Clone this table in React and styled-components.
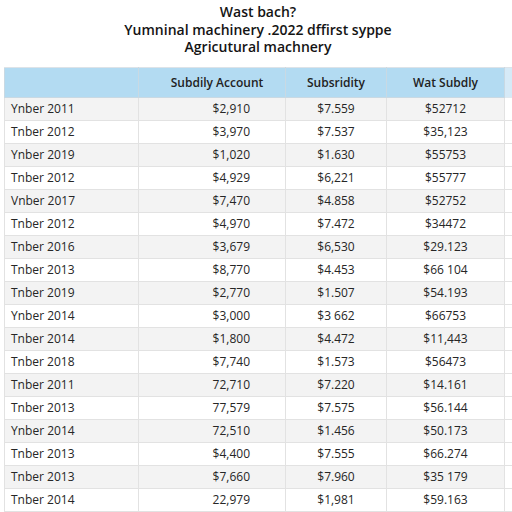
import React from 'react'
import styled, { createGlobalStyle } from 'styled-components';

const GlobalStyle = createGlobalStyle`
    body {
        margin: 0;
        background: #ffffff;
        font-family: "Open Sans", "Liberation Sans", sans-serif;
        color: #1e1e1e;
        overflow: hidden;
    }
`

const rows = [
    ['Ynber 2011', '$2,910', '$7.559', '$52712'],
    ['Tnber 2012', '$3,970', '$7.537', '$35,123'],
    ['Ynber 2019', '$1,020', '$1.630', '$55753'],
    ['Tnber 2012', '$4,929', '$6,221', '$55777'],
    ['Vnber 2017', '$7,470', '$4.858', '$52752'],
    ['Tnber 2012', '$4,970', '$7.472', '$34472'],
    ['Tnber 2016', '$3,679', '$6,530', '$29.123'],
    ['Tnber 2013', '$8,770', '$4.453', '$66 104'],
    ['Tnber 2019', '$2,770', '$1.507', '$54.193'],
    ['Ynber 2014', '$3,000', '$3 662', '$66753'],
    ['Tnber 2014', '$1,800', '$4.472', '$11,443'],
    ['Tnber 2018', '$7,740', '$1.573', '$56473'],
    ['Tnber 2011', '72,710', '$7.220', '$14.161'],
    ['Tnber 2013', '77,579', '$7.575', '$56.144'],
    ['Ynber 2014', '72,510', '$1.456', '$50.173'],
    ['Tnber 2013', '$4,400', '$7.555', '$66.274'],
    ['Tnber 2013', '$7,660', '$7.960', '$35 179'],
    ['Tnber 2014', '22,979', '$1,981', '$59.163'],
]

const App = () => {
    return (
        <>
            <GlobalStyle />
            <Page>
                <Title>
                    <div>Wast bach?</div>
                    <div>Yumninal machinery .2022 dffirst syppe</div>
                    <div>Agricutural machnery</div>
                </Title>

                <Table>
                    <colgroup>
                        <col style={{ width: 134 }} />
                        <col style={{ width: 147 }} />
                        <col style={{ width: 101 }} />
                        <col style={{ width: 118 }} />
                        <col style={{ width: 20 }} />
                    </colgroup>
                    <thead>
                        <tr>
                            <Head></Head>
                            <Head $shift>Subdily Account</Head>
                            <Head>Subsridity</Head>
                            <Head>Wat Subdly</Head>
                            <Head $faded></Head>
                        </tr>
                    </thead>
                    <tbody>
                        {
                            rows.map((row, i) => {
                                return (
                                    <Row key={i} $odd={i % 2 === 0}>
                                        <Cell $align="left">{row[0]}</Cell>
                                        <Cell $align="right">{row[1]}</Cell>
                                        <Cell $align="center">{row[2]}</Cell>
                                        <Cell $align="center">{row[3]}</Cell>
                                        <Cell $faded></Cell>
                                    </Row>
                                )
                            })
                        }
                    </tbody>
                </Table>
            </Page>
        </>
    )
}

export default App

const Page = styled.div`
    width: 512px;
    height: 512px;
    overflow: hidden;
    padding-top: 3px;
    box-sizing: border-box;
`

const Title = styled.div`
    text-align: center;
    font-weight: 600;
    font-size: 14px;
    line-height: 17.5px;
    color: #141414;
    margin-bottom: 11px;
    margin-left: 4px;
`

const Table = styled.table`
    margin-left: 4px;
    width: 520px;
    table-layout: fixed;
    border-collapse: collapse;
    font-size: 12px;
`

const Head = styled.th`
    height: 29px;
    padding: 0 0 0 ${p => p.$shift ? '10px' : '0'};
    background: ${p => p.$faded ? '#d6eaf7' : '#b3dbf2'};
    border: 1px solid ${p => p.$faded ? '#dfe9ef' : '#c9d9e3'};
    border-top: 1px solid #dde3e8;
    font-weight: 600;
    font-size: 12px;
    color: #222;
    text-align: center;
`

const Row = styled.tr`
    background: ${p => p.$odd ? '#f3f3f3' : '#ffffff'};
`

const Cell = styled.td`
    height: 22px;
    padding: 0 ${p => p.$align === 'right' ? '35px' : '6px'} 0 6px;
    border: 1px solid #e2e2e2;
    text-align: ${p => p.$align || 'left'};
    white-space: nowrap;
    color: #262626;
    background: ${p => p.$faded ? '#ffffff' : 'transparent'};
    border-right: ${p => p.$faded ? 'none' : '1px solid #e2e2e2'};
`
